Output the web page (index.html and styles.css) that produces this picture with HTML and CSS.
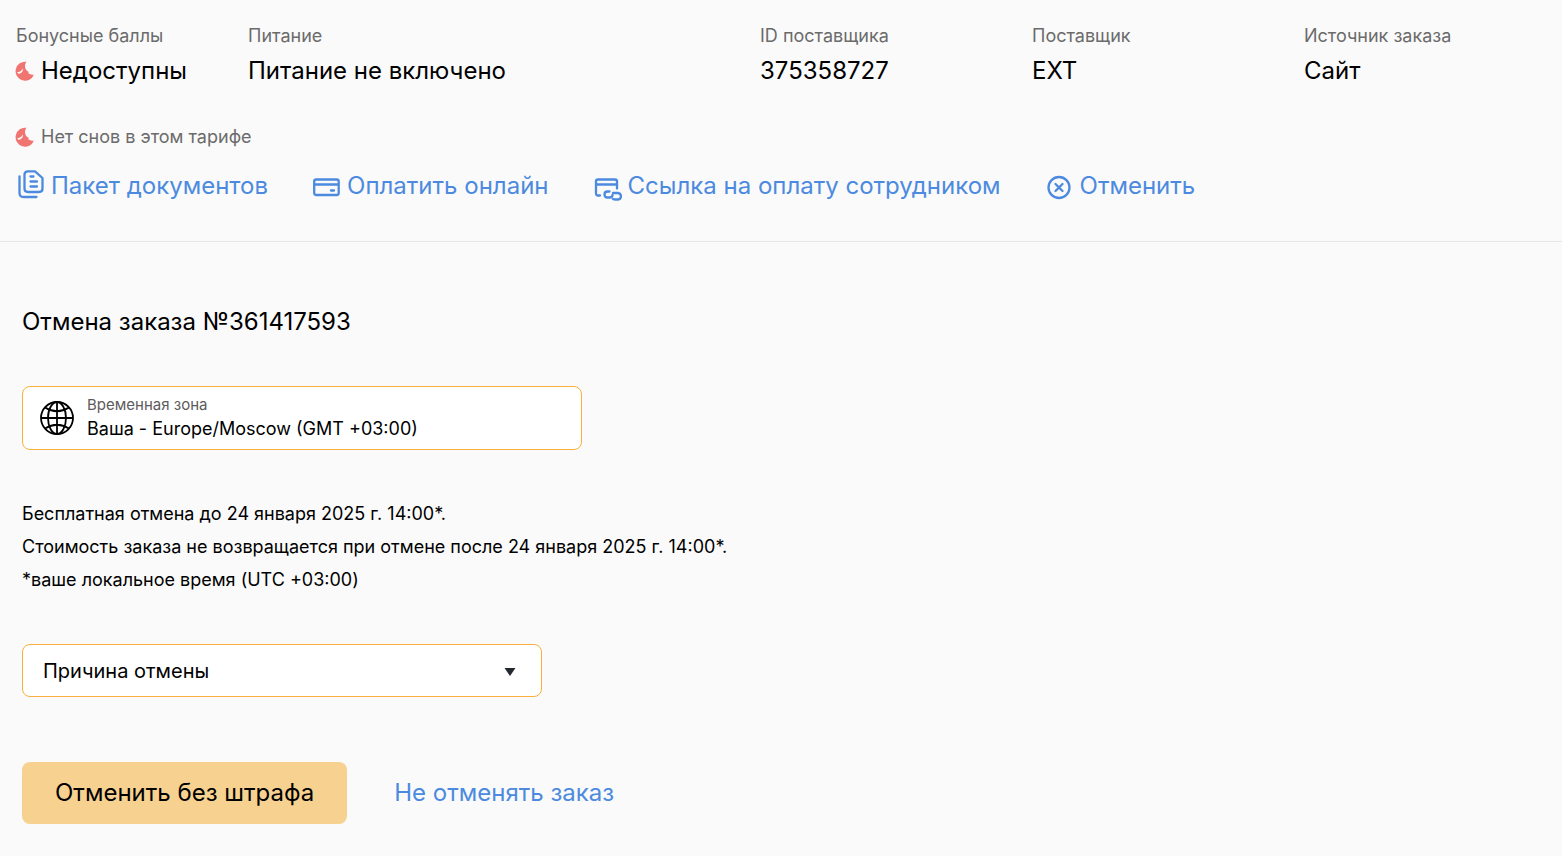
FILE: index.html
```html
<!DOCTYPE html>
<html lang="ru">
<head>
    <meta charset="UTF-8">
    <meta name="viewport" content="width=device-width, initial-scale=1.0">
    <title>Отмена заказа №361417593</title>
    <link rel="stylesheet" href="styles.css">
</head>
<body>
    <svg class="sprite" aria-hidden="true">
        <symbol id="moon" viewBox="0 0 20 20">
            <path fill="#f07470" d="M12.500 0.800A9.500 9.500 0 1 0 20 13.500C18 14 15.800 13.500 14.200 12.300C15 11.300 14.600 10.600 13.300 10C10.500 7.500 10.300 3.500 12.500 0.800Z"/>
            <path fill="#fafafa" d="M3.200 11.200C5.500 11.200 7.500 10 8.700 7.500C9.600 9.600 7.800 12.500 5 12.700C4.200 12.700 3.500 12 3.200 11.200Z"/>
        </symbol>
    </svg>
    <header class="order">
        <dl class="details">
            <div class="detail">
                <dt>Бонусные баллы</dt>
                <dd><svg class="moon"><use href="#moon"/></svg>Недоступны</dd>
            </div>
            <div class="detail">
                <dt>Питание</dt>
                <dd>Питание не включено</dd>
            </div>
            <div class="detail">
                <dt>ID поставщика</dt>
                <dd>375358727</dd>
            </div>
            <div class="detail">
                <dt>Поставщик</dt>
                <dd>EXT</dd>
            </div>
            <div class="detail">
                <dt>Источник заказа</dt>
                <dd>Сайт</dd>
            </div>
        </dl>
        <p class="dreams"><svg class="moon"><use href="#moon"/></svg>Нет снов в этом тарифе</p>
        <nav class="actions">
            <a href="#" class="action">
                <svg class="icon" viewBox="0 0 28 32">
                    <path d="M2.500 6.500V23Q2.500 27 6.500 27H19.500"/>
                    <path d="M11 1.300H18L25.500 8V18.500Q25.500 22 22 22H11Q7.500 22 7.500 18.500V4.800Q7.500 1.300 11 1.300Z"/>
                    <path d="M13.500 6.500H16.500M13.500 11.500H20M13.500 16.500H20"/>
                </svg>
                Пакет документов
            </a>
            <a href="#" class="action">
                <svg class="icon" viewBox="0 0 28 32">
                    <rect x="1.200" y="9.500" width="24.500" height="15.500" rx="2"/>
                    <path d="M2 14.500H25M18 20.500H21"/>
                </svg>
                Оплатить онлайн
            </a>
            <a href="#" class="action">
                <svg class="icon" viewBox="0 0 28 32">
                    <path d="M6 25.500H4Q2 25.500 2 23.500V11.500Q2 9.500 4 9.500H21Q23 9.500 23 11.500V18.500M2.500 14.500H22.500"/>
                    <path d="M15.500 21.500H13.500Q10.500 21.500 10.500 24.500T13.500 27.500H15.500Q18.500 27.500 18.500 25"/>
                    <path d="M19 23H24Q27 23.500 27 26.300T24 29.500H21.500Q20 29.500 19 29"/>
                </svg>
                Ссылка на оплату сотрудником
            </a>
            <a href="#" class="action">
                <svg class="icon" viewBox="0 0 28 32">
                    <circle cx="13" cy="17.500" r="10.500"/>
                    <path d="M9.500 14L16.500 21M16.500 14L9.500 21"/>
                </svg>
                Отменить
            </a>
        </nav>
    </header>

    <main class="cancel">
        <h1>Отмена заказа №361417593</h1>
        <form>
            <div class="zone">
                <svg class="globe" viewBox="0 0 36 36">
                    <circle cx="18" cy="18" r="16"/>
                    <ellipse cx="18" cy="18" rx="9" ry="16"/>
                    <path d="M18 2V34M2 18H34M6 7.500Q18 15 30 7.500M6 28.500Q18 21 30 28.500"/>
                </svg>
                <div class="zone-field">
                    <label for="timezone">Временная зона</label>
                    <select id="timezone">
                        <option>Ваша - Europe/Moscow (GMT +03:00)</option>
                    </select>
                </div>
            </div>
            <div class="terms">
                <p>Бесплатная отмена до 24 января 2025 г. 14:00*.</p>
                <p>Стоимость заказа не возвращается при отмене после 24 января 2025 г. 14:00*.</p>
                <p>*ваше локальное время (UTC +03:00)</p>
            </div>
            <div class="reason">
                <select id="reason" aria-label="Причина отмены">
                    <option>Причина отмены</option>
                </select>
                <svg class="caret" viewBox="0 0 12 8"><path d="M0.500 0H11.500L6 8Z"/></svg>
            </div>
            <div class="buttons">
                <button type="submit" class="submit">Отменить без штрафа</button>
                <button type="button" class="keep">Не отменять заказ</button>
            </div>
        </form>
    </main>
</body>
</html>
```

FILE: styles.css
```css
* {
    box-sizing: border-box;
}
html {
    background-color: #fff;
}
body {
    margin: 0;
    font-family: Inter, "Liberation Sans", sans-serif;
    font-size: 18px;
    line-height: 24px;
    color: #000;
    background-color: #fafafa;
}
p, dl, dd, h1 {
    margin: 0;
}
select, button {
    font: inherit;
    color: inherit;
    border: 0;
    padding: 0;
    background: none;
}
.sprite {
    display: none;
}
.order {
    padding: 24px 0 37px 16px;
    border-bottom: 1px solid #e6e6e6;
}
.details {
    display: grid;
    grid-template-columns: 232fr 512fr 272fr 272fr 258fr;
}
.detail dt {
    color: #6b6b6b;
}
.detail dd {
    display: flex;
    align-items: center;
    margin-top: 7px;
    font-size: 24px;
    line-height: 32px;
}
.moon {
    width: 20px;
    height: 20px;
    margin-left: -2px;
    margin-right: 7px;
}
.dreams {
    display: flex;
    align-items: center;
    margin-top: 38px;
    color: #6b6b6b;
}
.actions {
    display: flex;
    flex-wrap: wrap;
    gap: 45px;
    margin-top: 19px;
    padding-left: 1px;
}
.action {
    display: flex;
    align-items: center;
    gap: 6px;
    font-size: 24px;
    line-height: 36px;
    color: #4c8ae0;
    text-decoration: none;
}
.icon {
    width: 28px;
    height: 32px;
    fill: none;
    stroke: currentColor;
    stroke-width: 2.3;
    stroke-linecap: round;
    stroke-linejoin: round;
}
.cancel {
    padding: 64px 22px 32px;
}
.cancel h1 {
    font-size: 24px;
    font-weight: 400;
    line-height: 32px;
}
.zone {
    display: flex;
    align-items: center;
    gap: 12px;
    max-width: 560px;
    height: 64px;
    margin-top: 48px;
    padding: 0 16px;
    border: 1px solid #f9b03d;
    border-radius: 8px;
    background-color: #fff;
}
.globe {
    width: 36px;
    height: 36px;
    fill: none;
    stroke: #000;
    stroke-width: 1.8;
}
.zone-field {
    flex: 1;
}
.zone label {
    display: block;
    font-size: 15px;
    line-height: 22px;
    color: #5c5c5c;
}
.zone select {
    display: block;
    width: 100%;
    height: 26px;
    appearance: none;
}
.terms {
    margin-top: 47px;
    line-height: 33px;
}
.reason {
    position: relative;
    max-width: 520px;
    margin-top: 48px;
}
.reason select {
    display: block;
    width: 100%;
    height: 53px;
    padding: 0 20px;
    border: 1px solid #f9b03d;
    border-radius: 8px;
    font-size: 20px;
    background-color: #fff;
    appearance: none;
}
.caret {
    position: absolute;
    top: 24px;
    right: 26px;
    width: 12px;
    height: 8px;
    fill: #23272f;
    pointer-events: none;
}
.buttons {
    display: flex;
    gap: 47px;
    margin-top: 65px;
}
.buttons button {
    height: 62px;
    font-size: 24px;
    cursor: pointer;
}
.buttons .submit {
    padding: 0 33px;
    border-radius: 8px;
    background-color: #f7d190;
}
.buttons .keep {
    color: #4c8ae0;
}
```
